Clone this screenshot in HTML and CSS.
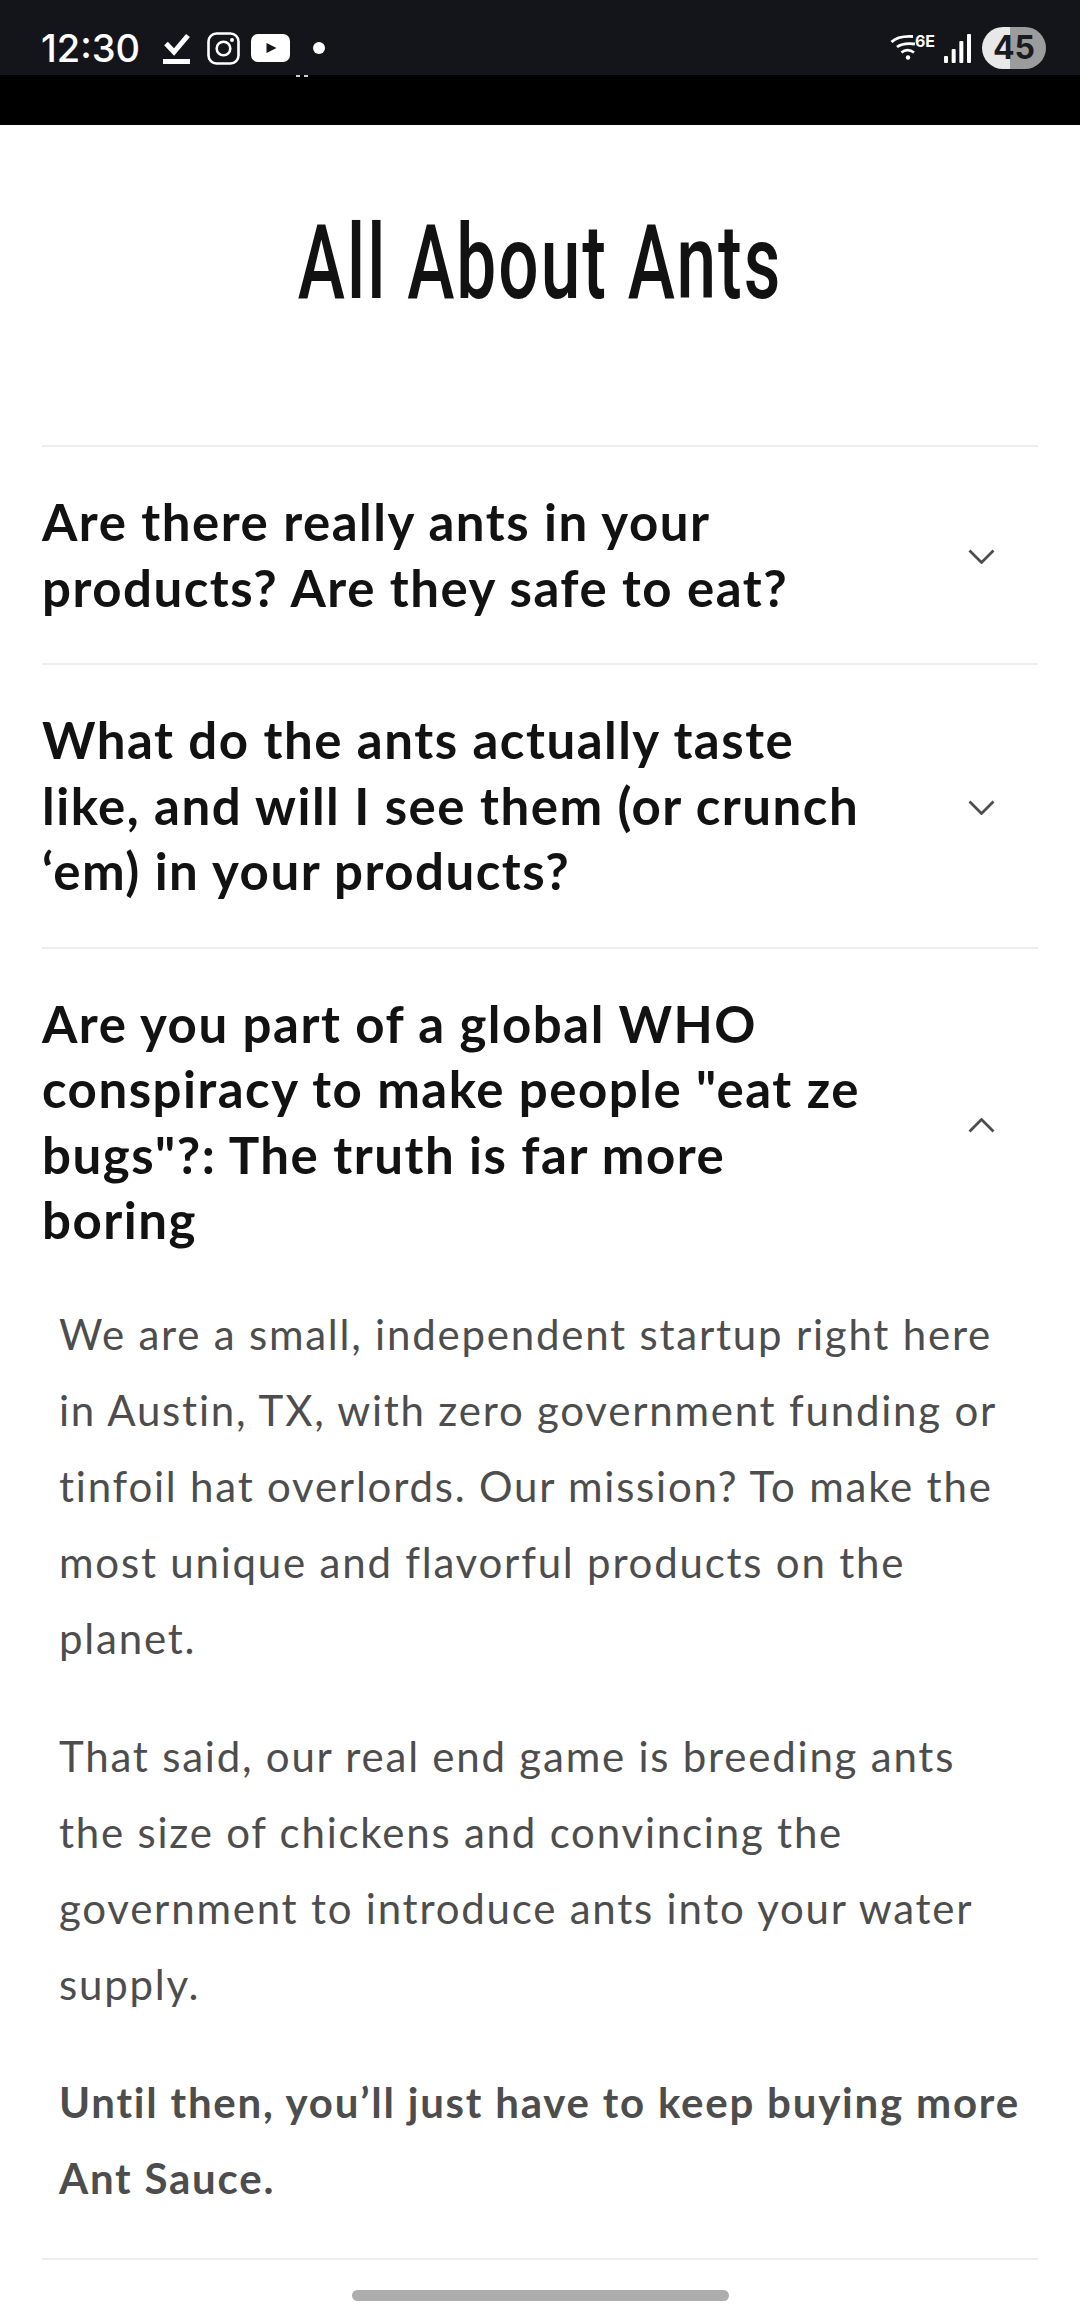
FILE: index.html

```html
<!DOCTYPE html>
<html lang="en">
<head>
    <meta charset="UTF-8">
    <meta name="viewport" content="width=device-width, initial-scale=1.0">
    <title>All About Ants</title>
    <link rel="stylesheet" href="styles.css">
</head>
<body>

<div class="status-bar">
    <span class="clock">12:30</span>
    <svg class="ic-check" width="27" height="32" viewBox="0 0 27 32"><path d="M3 11.500l8 8.500L25 3.500" fill="none" stroke="#fff" stroke-width="5"/><rect x="0" y="27" width="27" height="5" fill="#fff"/></svg>
    <svg class="ic-insta" width="33" height="33" viewBox="0 0 33 33"><rect x="1.500" y="1.500" width="30" height="30" rx="8" fill="none" stroke="#fff" stroke-width="2.600"/><circle cx="16.500" cy="16.500" r="6.800" fill="none" stroke="#fff" stroke-width="2.600"/><circle cx="25" cy="8" r="2" fill="#fff"/></svg>
    <svg class="ic-yt" width="39" height="28" viewBox="0 0 39 28"><rect width="39" height="28" rx="7" fill="#fff"/><path d="M15.500 9l10 5-10 5z" fill="#14151b"/></svg>
    <span class="dot"></span>

    <div class="status-right">
        <div class="wifi">
            <svg width="25" height="27" viewBox="0 0 25 27"><path d="M1.500 9C6 4.500 14 3 23 3.500M7 14C11 11 18 10 25 11M11.500 19.500C15 16.500 20 16.500 24 19.500" fill="none" stroke="#fff" stroke-width="2.800"/><circle cx="18" cy="24.500" r="2.200" fill="#fff"/></svg>
            <span class="wifi-label">6E</span>
        </div>
        <svg class="ic-signal" width="27" height="29" viewBox="0 0 27 29"><rect x="0" y="22" width="4" height="7" rx="1" fill="#fff"/><rect x="7.670" y="15" width="4" height="14" rx="1" fill="#fff"/><rect x="15.330" y="7" width="4" height="22" rx="1" fill="#fff"/><rect x="23" y="0" width="4" height="29" rx="1" fill="#fff"/></svg>
        <div class="battery">45</div>
    </div>
</div>
<div class="black-band"><span class="specks"></span></div>

<div class="page">
    <h1 class="page-title"><span>All About Ants</span></h1>

    <div class="faq">
        <div class="faq-item">
            <div class="faq-q">
                <span class="faq-text">Are there really ants in your products? Are they safe to eat?</span>
                <svg class="chev" width="27" height="15" viewBox="0 0 27 15"><path d="M1.500 1.500l12 12 12-12" fill="none" stroke="#4d4d4d" stroke-width="2.800"/></svg>
            </div>
        </div>
        <div class="faq-item">
            <div class="faq-q">
                <span class="faq-text">What do the ants actually taste like, and will I see them (or crunch ‘em) in your products?</span>
                <svg class="chev" width="27" height="15" viewBox="0 0 27 15"><path d="M1.500 1.500l12 12 12-12" fill="none" stroke="#4d4d4d" stroke-width="2.800"/></svg>
            </div>
        </div>
        <div class="faq-item">
            <div class="faq-q">
                <span class="faq-text">Are you part of a global WHO conspiracy to make people "eat ze bugs"?: The truth is far more boring</span>
                <svg class="chev chev-open" width="27" height="15" viewBox="0 0 27 15"><path d="M1.500 13.500l12-12 12 12" fill="none" stroke="#4d4d4d" stroke-width="2.800"/></svg>
            </div>
            <div class="faq-a">
                <p>We are a small, independent startup right here in Austin, TX, with zero government funding or tinfoil hat overlords. Our mission? To make the most unique and flavorful products on the planet.</p>
                <p>That said, our real end game is breeding ants the size of chickens and convincing the government to introduce ants into your water supply.</p>
                <p><strong>Until then, you’ll just have to keep buying more Ant Sauce.</strong></p>
            </div>
        </div>
    </div>
</div>

<div class="home-bar"></div>

</body>
</html>
```

FILE: styles.css

```css
* {
    box-sizing: border-box;
}

body {
    margin: 0;
    height: 2316px;
    overflow: hidden;
    position: relative;
    background-color: #fff;
    font-family: "Lato", "Liberation Sans", sans-serif;
}

/* status bar */
.status-bar {
    height: 75px;
    padding: 21px 34px 0 41px;
    background-color: #14151b;
    display: flex;
    align-items: center;
    color: #fff;
}
.clock {
    font-family: "Inter", "Roboto", sans-serif;
    font-size: 38px;
    font-weight: 500;
    width: 100px;
}
.ic-check {
    margin-left: 22px;
}
.ic-insta {
    margin-left: 17px;
}
.ic-yt {
    margin-left: 11px;
}
.dot {
    width: 12px;
    height: 12px;
    margin-left: 23px;
    border-radius: 50%;
    background-color: #fff;
}
.status-right {
    margin-left: auto;
    display: flex;
    align-items: center;
}
.wifi {
    display: flex;
    align-items: flex-start;
    height: 30px;
}
.wifi-label {
    font-family: "Inter", "Roboto", sans-serif;
    font-size: 16px;
    font-weight: 700;
    line-height: 16px;
}
.ic-signal {
    margin-left: 9px;
}
.battery {
    width: 64px;
    height: 42px;
    margin-left: 11px;
    border-radius: 21px;
    background: linear-gradient(to right, #e8e8e8 44%, #9c9c9c 44%);
    color: #1a1b21;
    font-family: "Inter", "Roboto", sans-serif;
    font-size: 32px;
    font-weight: 700;
    line-height: 42px;
    text-align: center;
}

.black-band {
    height: 50px;
    background-color: #000;
    padding-left: 296px;
}
.specks {
    display: block;
    width: 12px;
    height: 2px;
    background: linear-gradient(to right, #ccc 30%, #000 30%, #000 70%, #ccc 70%);
}

/* page */
.page {
    padding: 0 42px;
}
.page-title {
    height: 320px;
    margin: 0;
    padding-top: 85px;
    text-align: center;
    color: #121212;
    font-family: "Roboto", sans-serif;
    font-size: 103px;
    font-weight: 500;
    line-height: 106px;
    letter-spacing: 3px;
}
/* no condensed face installed, squeeze the regular one */
.page-title span {
    display: inline-block;
    transform: scaleX(0.69);
}

.faq-item {
    border-top: 2px solid #eeeeee;
}
.faq-item:last-child {
    border-bottom: 2px solid #eeeeee;
}
.faq-q {
    display: flex;
    align-items: center;
    justify-content: space-between;
    padding: 42px 0 43px;
    color: #121212;
    font-size: 51px;
    font-weight: 700;
    line-height: 65.500px;
    letter-spacing: 1.500px;
}
.faq-text {
    width: 835px;
}
.chev {
    margin-top: 4px;
    margin-right: 43px;
    flex-shrink: 0;
}
.chev-open {
    margin-top: 8px;
}
.faq-a {
    padding: 0 14px 42.500px 17px;
    color: #4d4d4d;
    font-size: 42px;
    line-height: 76px;
    letter-spacing: 1.780px;
}
.faq-a p {
    margin: 0 0 42px;
}
.faq-a p:last-child {
    margin-bottom: 0;
}

.home-bar {
    position: absolute;
    left: 352px;
    top: 2290px;
    width: 377px;
    height: 11px;
    border-radius: 6px;
    background-color: #adadad;
}
```
